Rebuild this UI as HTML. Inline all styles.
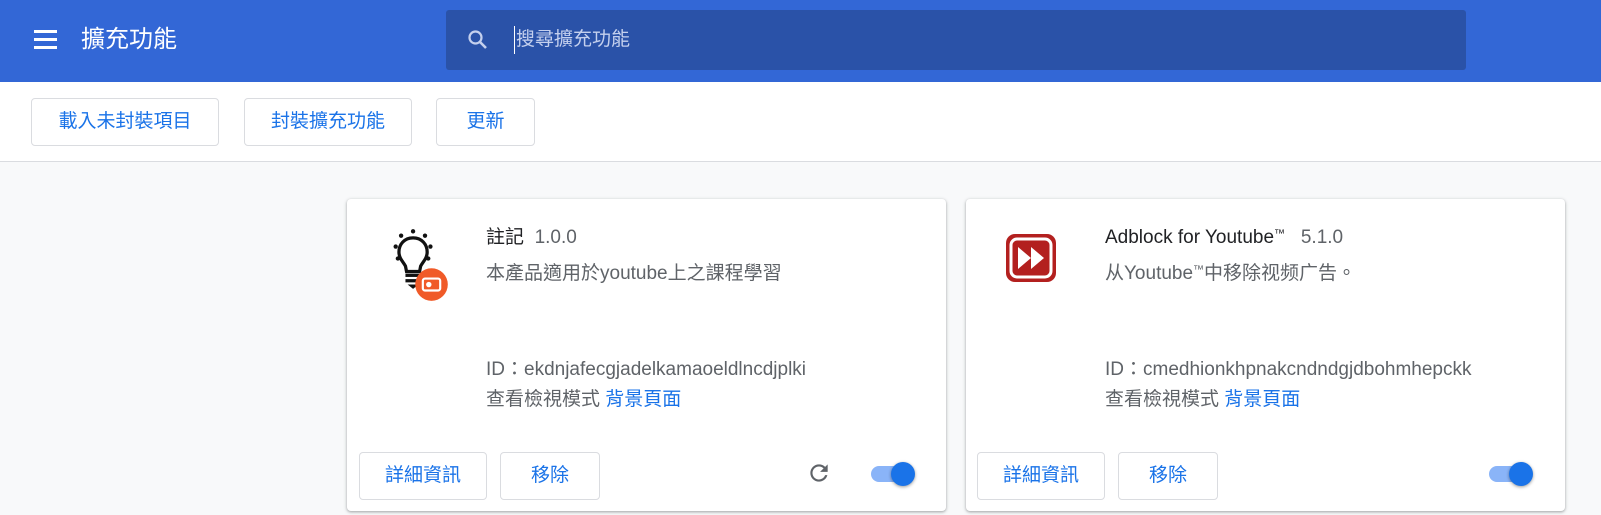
<!DOCTYPE html>
<html><head><meta charset="utf-8"><style>
*{margin:0;padding:0;box-sizing:border-box}
body{width:1601px;height:515px;overflow:hidden;background:#f8f9fa;font-family:"Liberation Sans","Noto Sans CJK TC",sans-serif;position:relative}
.hdr{position:absolute;left:0;top:0;width:1601px;height:82px;background:#3367d6}
.ham{position:absolute;left:34px;width:23px;height:3px;background:#fff}
.title{position:absolute;left:81px;top:24px;color:#fff;font-size:24px;line-height:32px}
.search{position:absolute;left:446px;top:10px;width:1020px;height:60px;background:#2a52a8;border-radius:3px}
.ph{position:absolute;left:68px;top:16px;font-size:19px;color:#c4d0ee;line-height:28px;border-left:1px solid #fff;padding-left:1px}
.tb{position:absolute;left:0;top:82px;width:1601px;height:80px;background:#fff;border-bottom:1px solid #dadce0}
.btn{position:absolute;height:48px;border:1px solid #dadce0;border-radius:4px;background:#fff;color:#1a73e8;font-size:19px;text-align:center;line-height:46px}
.card{position:absolute;top:199px;width:599px;height:312px;background:#fff;border-radius:4px;box-shadow:0 1px 2px rgba(60,64,67,.3),0 1px 3px 1px rgba(60,64,67,.15)}
.t{position:absolute;left:139px;font-size:19px;color:#5f6368;white-space:nowrap;line-height:26px}
.t b{font-weight:normal;color:#202124}
.tm{font-size:11px;vertical-align:6px;line-height:0}
.lnk{color:#1a73e8}
.tog{position:absolute;top:267px;width:40px;height:16px;border-radius:8px;background:#8ab4f8}
.tog i{position:absolute;right:-4px;top:-4px;width:24px;height:24px;border-radius:50%;background:#1a73e8;box-shadow:0 1px 3px rgba(0,0,0,.4)}
</style></head><body>
<div class="hdr">
<div class="ham" style="top:30px"></div><div class="ham" style="top:38px"></div><div class="ham" style="top:46px"></div>
<div class="title">擴充功能</div>
<div class="search">
<svg style="position:absolute;left:20px;top:18px" width="24" height="24" viewBox="0 0 24 24"><circle cx="9.5" cy="9.5" r="6" fill="none" stroke="#c4d0ee" stroke-width="2.2"/><path d="M14 14l6 6" stroke="#c4d0ee" stroke-width="2.6"/></svg>
<div class="ph">搜尋擴充功能</div>
</div>
</div>
<div class="tb">
<div class="btn" style="left:31px;top:16px;width:188px">載入未封裝項目</div>
<div class="btn" style="left:244px;top:16px;width:168px">封裝擴充功能</div>
<div class="btn" style="left:436px;top:16px;width:99px">更新</div>
</div>

<div class="card" style="left:347px">
<svg style="position:absolute;left:40px;top:29px" width="76" height="74" viewBox="0 0 70 68">
<g fill="#111"><circle cx="24" cy="3" r="2"/><circle cx="13" cy="7" r="2"/><circle cx="35" cy="7" r="2"/><circle cx="8" cy="17" r="2"/><circle cx="40" cy="17" r="2"/><circle cx="10" cy="28" r="2"/><circle cx="38" cy="28" r="2"/></g>
<path d="M24 9c-8 0-13 6-13 13 0 6 4 9 6 13l1 5h12l1-5c2-4 6-7 6-13 0-7-5-13-13-13z" fill="none" stroke="#111" stroke-width="3"/>
<rect x="17" y="42" width="14" height="3" fill="#111"/><rect x="17" y="47" width="14" height="3" fill="#111"/><path d="M19 52h10l-5 4z" fill="#111"/>
<circle cx="41" cy="52" r="15" fill="#f05a28"/>
<rect x="33" y="46.5" width="16" height="11" rx="2" fill="none" stroke="#fff" stroke-width="2"/><circle cx="38.5" cy="52" r="2.5" fill="#fff"/>
</svg>
<div class="t" style="top:26px"><b>註記</b>&nbsp; 1.0.0</div>
<div class="t" style="top:62px">本產品適用於youtube上之課程學習</div>
<div class="t" style="top:158px">ID：ekdnjafecgjadelkamaoeldlncdjplki</div>
<div class="t" style="top:188px">查看檢視模式 <span class="lnk">背景頁面</span></div>
<div class="btn" style="left:12px;top:253px;width:128px">詳細資訊</div>
<div class="btn" style="left:153px;top:253px;width:100px">移除</div>
<svg style="position:absolute;left:459px;top:261px" width="26" height="26" viewBox="0 0 24 24"><path d="M17.65 6.35A7.958 7.958 0 0 0 12 4c-4.42 0-7.990 3.58-7.990 8s3.57 8 7.990 8c3.730 0 6.840-2.550 7.730-6h-2.080A5.990 5.990 0 0 1 12 18c-3.310 0-6-2.690-6-6s2.690-6 6-6c1.660 0 3.140.690 4.220 1.780L13 11h7V4l-2.350 2.350z" fill="#5f6368"/></svg>
<div class="tog" style="left:524px"><i></i></div>
</div>

<div class="card" style="left:966px">
<svg style="position:absolute;left:39px;top:34px" width="52" height="50" viewBox="0 0 52 50">
<rect x="1" y="1" width="50" height="48" rx="9" fill="#b3201f"/>
<rect x="6" y="6" width="40" height="38" rx="6" fill="none" stroke="#fff" stroke-width="3"/>
<path d="M13 14l13 11-13 11zM26 14l13 11-13 11z" fill="#fff"/>
</svg>
<div class="t" style="top:26px"><b>Adblock for Youtube<span class="tm">™</span></b>&nbsp;&nbsp; 5.1.0</div>
<div class="t" style="top:62px">从Youtube<span class="tm">™</span>中移除视频广告。</div>
<div class="t" style="top:158px">ID：cmedhionkhpnakcndndgjdbohmhepckk</div>
<div class="t" style="top:188px">查看檢視模式 <span class="lnk">背景頁面</span></div>
<div class="btn" style="left:11px;top:253px;width:128px">詳細資訊</div>
<div class="btn" style="left:152px;top:253px;width:100px">移除</div>
<div class="tog" style="left:523px"><i></i></div>
</div>
</body></html>
